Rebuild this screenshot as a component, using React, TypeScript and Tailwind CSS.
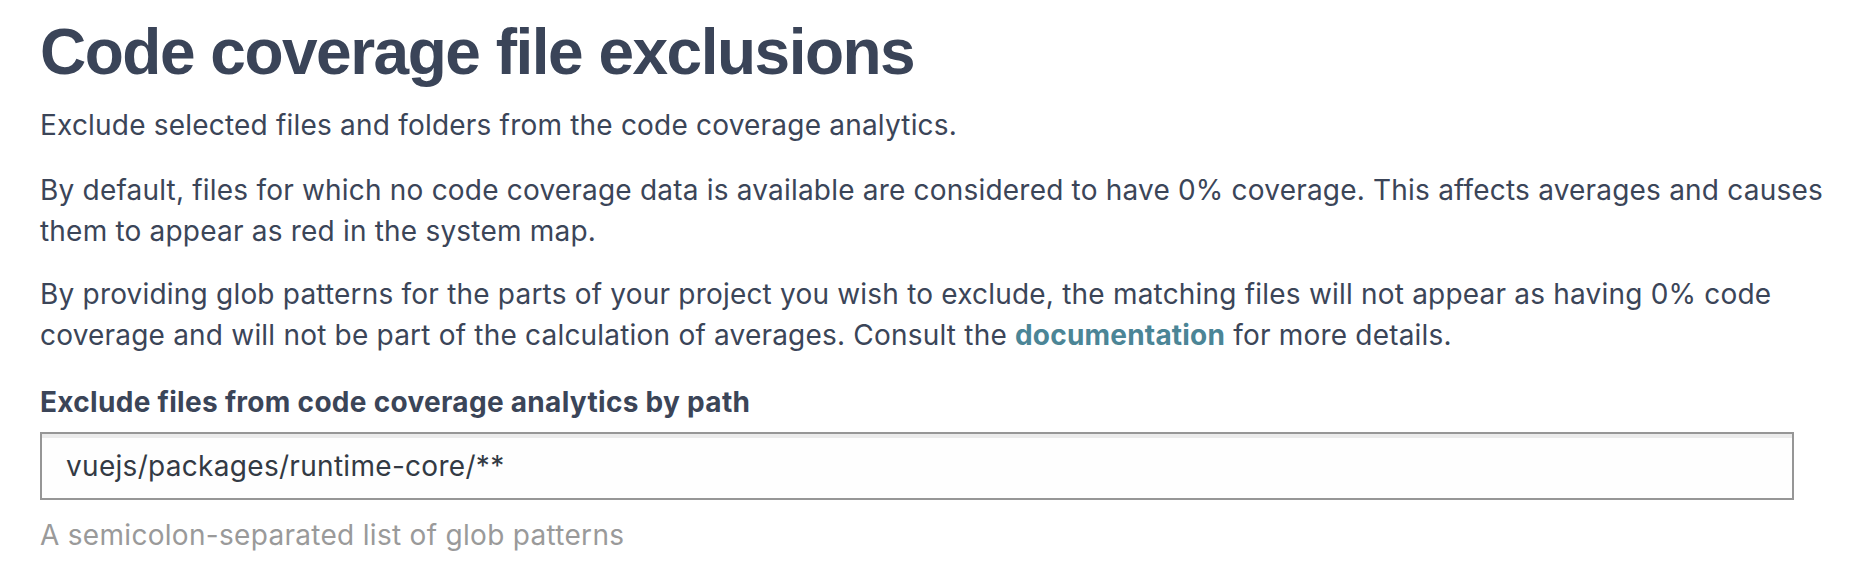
import React from 'react';

const body = "font-['Inter','Noto_Sans',sans-serif]";

export default function App() {
  return (
    <div className="min-h-[576px] bg-white pl-10 pr-4 pt-[16px] text-[#3b4558]">
      {/* ── Heading ─────────────────────────────────────────── */}
      <h1 className="font-['Liberation_Sans',Arial,sans-serif] text-[64px] font-bold leading-[72px] tracking-[-1.5px] text-[#3a4458]">
        Code coverage file exclusions
      </h1>

      <div className={`${body} mt-[17px] text-[28px] leading-[41px] tracking-[0.2px]`}>
        <p>Exclude selected files and folders from the code coverage analytics.</p>
        <p className="mt-6">
          By default, files for which no code coverage data is available are considered to have 0% coverage. This
          affects averages and causes them to appear as red in the system map.
        </p>
        <p className="mt-[22px]">
          By providing glob patterns for the parts of your project you wish to exclude, the matching files will not
          appear as having 0% code coverage and will not be part of the calculation of averages. Consult the{' '}
          <a href="#" className="font-bold text-[#4b8596]">
            documentation
          </a>{' '}
          for more details.
        </p>

        {/* ── Field ─────────────────────────────────────────── */}
        <label className="mt-[28px] block text-[28px] font-bold leading-[36px] tracking-[0.3px]">
          Exclude files from code coverage analytics by path
        </label>
        <input
          type="text"
          defaultValue="vuejs/packages/runtime-core/**"
          className="mt-[12px] block h-[68px] w-[1754px] border-2 border-[#969696] bg-[#fefefe] px-6 text-[28px] tracking-[0.3px] text-[#333a44] shadow-[inset_0_4px_0_#ebebeb] outline-none"
        />
        <p className="mt-[15px] text-[28px] tracking-[0.3px] text-[#9a9a9a]">
          A semicolon-separated list of glob patterns
        </p>
      </div>
    </div>
  );
}
